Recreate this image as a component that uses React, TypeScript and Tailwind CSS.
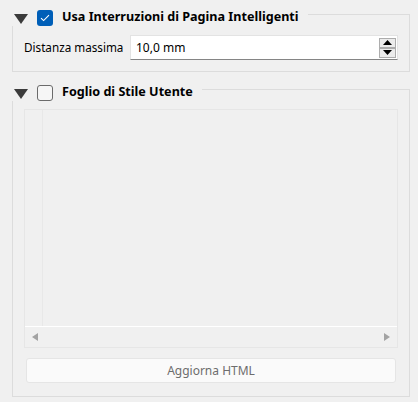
import * as React from 'react';

const Arrow = () => (
  <svg width="14" height="10" viewBox="0 0 14 10" className="shrink-0">
    <polygon points="0,0 14,0 7,10" fill="#3b3b3b" />
  </svg>
);

function Check({ checked }: { checked: boolean }) {
  if (checked) {
    return (
      <div className="w-[16px] h-[16px] rounded-[3px] bg-[#005fb8] flex items-center justify-center shrink-0">
        <svg width="10" height="8" viewBox="0 0 10 8">
          <polyline points="1,4.2 3.6,6.6 9,1.2" fill="none" stroke="#fff" strokeWidth="1.1" />
        </svg>
      </div>
    );
  }
  return <div className="w-[16px] h-[16px] rounded-[3px] border border-[#6b6b6b] bg-[#f6f6f6] shrink-0" />;
}

function GroupHeader({ checked, title }: { checked: boolean; title: string }) {
  return (
    <div className="flex h-[17px] items-center">
      <div className="ml-[2px] mt-[2px]">
        <Arrow />
      </div>
      <div className="ml-[9px]">
        <Check checked={checked} />
      </div>
      <span className="ml-[9px] text-[12.6px] font-bold text-black leading-none whitespace-nowrap">{title}</span>
      <div className="flex-1 self-stretch ml-[9px] mt-[5px] border-t border-r border-[#dcdcdc]" />
    </div>
  );
}

function SpinBtn({ up }: { up: boolean }) {
  return (
    <div className="w-[17px] h-[10px] border border-[#adadad] bg-[#ececec] flex items-center justify-center">
      <svg width="9" height="5" viewBox="0 0 9 5">
        <polygon points={up ? '0,5 9,5 4.5,0' : '0,0 9,0 4.5,5'} fill="#000" />
      </svg>
    </div>
  );
}

export default function App() {
  return (
    <div className="w-[418px] h-[402px] bg-[#f0f0f0] font-['Noto_Sans',sans-serif] overflow-hidden">
      <div className="pt-[9px] pl-[12px] w-[410px]">
        {/* Gruppo 1 */}
        <GroupHeader checked title="Usa Interruzioni di Pagina Intelligenti" />
        <div className="border-l border-r border-b border-[#dcdcdc] pl-[11px] pr-[11px] pt-[9px] pb-[11px]">
          <div className="flex items-center">
            <span className="w-[106px] text-[11.7px] text-black">Distanza massima</span>
            <div className="flex-1 h-[25px] bg-white border border-[#e3e3e3] border-b-[#858585] flex items-center pl-[5px]">
              <span className="flex-1 text-[12px] text-black">10,0 mm</span>
              <div className="flex flex-col mr-[1px]">
                <SpinBtn up />
                <SpinBtn up={false} />
              </div>
            </div>
          </div>
        </div>

        {/* Gruppo 2 */}
        <div className="mt-[12px]">
          <GroupHeader checked={false} title="Foglio di Stile Utente" />
        </div>
        <div className="border-l border-r border-b border-[#dcdcdc] pl-[11px] pr-[11px] pt-[8px] pb-[13px]">
          <div className="h-[239px] border border-[#e6e6e6] flex flex-col">
            <div className="flex-1 flex">
              <div className="w-[18px] border-r border-[#e8e8e8]" />
              <div className="flex-1" />
            </div>
            <div className="h-[21px] border-t border-white flex items-center justify-between px-[7px]">
              <svg width="6" height="8" viewBox="0 0 6 8">
                <polygon points="6,0 6,8 0,4" fill="#a3a3a3" />
              </svg>
              <svg width="6" height="8" viewBox="0 0 6 8">
                <polygon points="0,0 0,8 6,4" fill="#a3a3a3" />
              </svg>
            </div>
          </div>
          <div className="mt-[10px] mx-[2px] h-[25px] rounded-[3px] border border-[#e5e5e5] bg-[#fafafa] flex items-center justify-center">
            <span className="text-[12px] text-[#6d6d6d]">Aggiorna HTML</span>
          </div>
        </div>
      </div>
    </div>
  );
}
